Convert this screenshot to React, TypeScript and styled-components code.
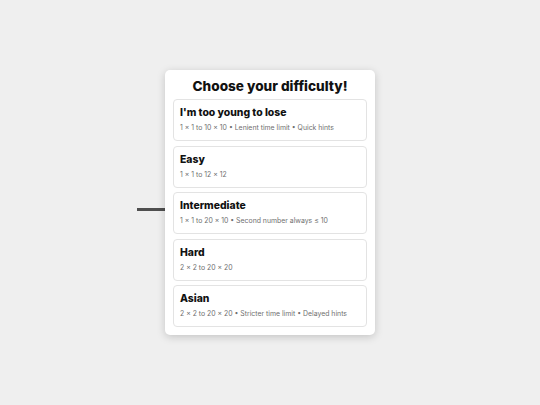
import React from "react";
import styled, { createGlobalStyle } from "styled-components";

const Global = createGlobalStyle`
  html, body { margin: 0; padding: 0; }
  body {
    background: #efefef;
    font-family: Inter, "Noto Sans", sans-serif;
    width: 540px;
    height: 405px;
    overflow: hidden;
  }
`;

const Stage = styled.div`
  position: relative;
  width: 540px;
  height: 405px;
  display: flex;
  align-items: center;
  justify-content: center;
`;

const Streak = styled.div`
  position: absolute;
  left: 137px;
  top: 208px;
  width: 60px;
  height: 3px;
  background: #4f4f4f;
  filter: blur(0.7px);
`;

const Modal = styled.div`
  position: relative;
  width: 210px;
  box-sizing: border-box;
  background: #fff;
  border-radius: 5px;
  box-shadow: 0 2px 8px rgba(0, 0, 0, 0.18);
  padding: 7px 8px 8px;
  display: flex;
  flex-direction: column;
`;

const Title = styled.h1`
  margin: 0 0 4px;
  font-size: 13.6px;
  line-height: 18px;
  font-weight: 800;
  text-align: center;
  color: #111;
`;

const List = styled.div`
  display: flex;
  flex-direction: column;
  gap: 4.5px;
`;

const Card = styled.div`
  border: 1px solid #e3e3e3;
  border-radius: 4px;
  height: 42px;
  box-sizing: border-box;
  padding: 6px 6px 0;
  display: flex;
  flex-direction: column;
`;

const CardTitle = styled.div`
  font-size: 10.4px;
  font-weight: 800;
  line-height: 14px;
  color: #111;
`;

const CardSub = styled.div`
  margin-top: 3px;
  font-size: 6.9px;
  line-height: 9px;
  color: #6f6f6f;
  white-space: nowrap;
`;

const levels = [
  { name: "I'm too young to lose", desc: "1 × 1 to 10 × 10 • Lenient time limit • Quick hints" },
  { name: "Easy", desc: "1 × 1 to 12 × 12" },
  { name: "Intermediate", desc: "1 × 1 to 20 × 10 • Second number always ≤ 10" },
  { name: "Hard", desc: "2 × 2 to 20 × 20" },
  { name: "Asian", desc: "2 × 2 to 20 × 20 • Stricter time limit • Delayed hints" },
];

export default function App() {
  return (
    <>
      <Global />
      <Stage>
        <Streak />
        <Modal>
          <Title>Choose your difficulty!</Title>
          <List>
            {levels.map((l) => (
              <Card key={l.name}>
                <CardTitle>{l.name}</CardTitle>
                <CardSub>{l.desc}</CardSub>
              </Card>
            ))}
          </List>
        </Modal>
      </Stage>
    </>
  );
}
